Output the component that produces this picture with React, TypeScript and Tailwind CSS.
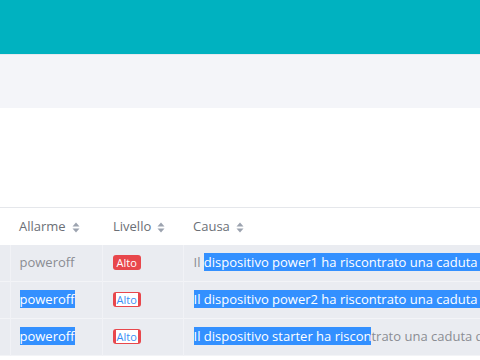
import React from 'react';

const SortIcon: React.FC = () => (
  <svg width="8" height="11" viewBox="0 0 8 11" className="ml-[6px] inline-block">
    <path d="M4 0.5 L7.5 4.5 H0.5 Z" fill="#9ca3af" />
    <path d="M4 10.5 L7.5 6.5 H0.5 Z" fill="#9ca3af" />
  </svg>
);

const Sel: React.FC<{ children: React.ReactNode }> = ({ children }) => (
  <span className="bg-[#3390ff] text-white">{children}</span>
);

const Badge: React.FC<{ selected?: boolean }> = ({ selected }) => (
  <span className="inline-flex h-[15px] items-center rounded-[3px] bg-[#e8474c] px-[3px] text-[11px] leading-[13px] text-white">
    {selected ? <span className="bg-white px-[1px] text-[#3b8ff5]">Alto</span> : <span className="px-[1px]">Alto</span>}
  </span>
);

const App: React.FC = () => {
  return (
    <div className="h-[360px] w-[480px] overflow-hidden bg-white font-['Open_Sans',sans-serif]">
      {/* Top bar */}
      <div className="h-[54px] bg-[#00b2c0]" />
      <div className="h-[54px] border-t border-[#e6e9ef] bg-[#f4f5f9]" />
      <div className="h-[99px] bg-white" />

      {/* Alarms table */}
      <table className="w-[600px] table-fixed border-collapse whitespace-nowrap text-[13px] text-[#8a8d93]">
        <colgroup>
          <col className="w-[10px]" />
          <col className="w-[92px]" />
          <col className="w-[81px]" />
          <col />
        </colgroup>
        <thead>
          <tr className="h-[37px] border-t border-[#e5e7eb] text-[#6b6f76]">
            <th />
            <th className="pl-[9px] text-left font-normal">
              Allarme<SortIcon />
            </th>
            <th className="pl-[11px] text-left font-normal">
              Livello<SortIcon />
            </th>
            <th className="pl-[10px] text-left font-normal">
              Causa<SortIcon />
            </th>
          </tr>
        </thead>
        <tbody>
          <tr className="h-[37px] border-b border-[#f3f4f7] bg-[#eaecf1]">
            <td className="border-r border-[#f1f2f6]" />
            <td className="border-r border-[#f1f2f6] pl-[9px]">poweroff</td>
            <td className="border-r border-[#f1f2f6] pl-[10px]">
              <Badge />
            </td>
            <td className="pl-[10px]">
              Il <Sel>dispositivo power1 ha riscontrato una caduta di tensione</Sel>
            </td>
          </tr>
          <tr className="h-[37px] border-b border-[#f3f4f7] bg-[#eaecf1]">
            <td className="border-r border-[#f1f2f6]" />
            <td className="border-r border-[#f1f2f6] pl-[9px]">
              <Sel>poweroff</Sel>
            </td>
            <td className="border-r border-[#f1f2f6] pl-[10px]">
              <Badge selected />
            </td>
            <td className="pl-[10px]">
              <Sel>Il dispositivo power2 ha riscontrato una caduta di tensione</Sel>
            </td>
          </tr>
          <tr className="h-[37px] border-b border-[#f3f4f7] bg-[#eaecf1]">
            <td className="border-r border-[#f1f2f6]" />
            <td className="border-r border-[#f1f2f6] pl-[9px]">
              <Sel>poweroff</Sel>
            </td>
            <td className="border-r border-[#f1f2f6] pl-[10px]">
              <Badge selected />
            </td>
            <td className="pl-[10px]">
              <Sel>Il dispositivo starter ha riscon</Sel>trato una caduta di tensione
            </td>
          </tr>
        </tbody>
      </table>
    </div>
  );
};

export default App;
